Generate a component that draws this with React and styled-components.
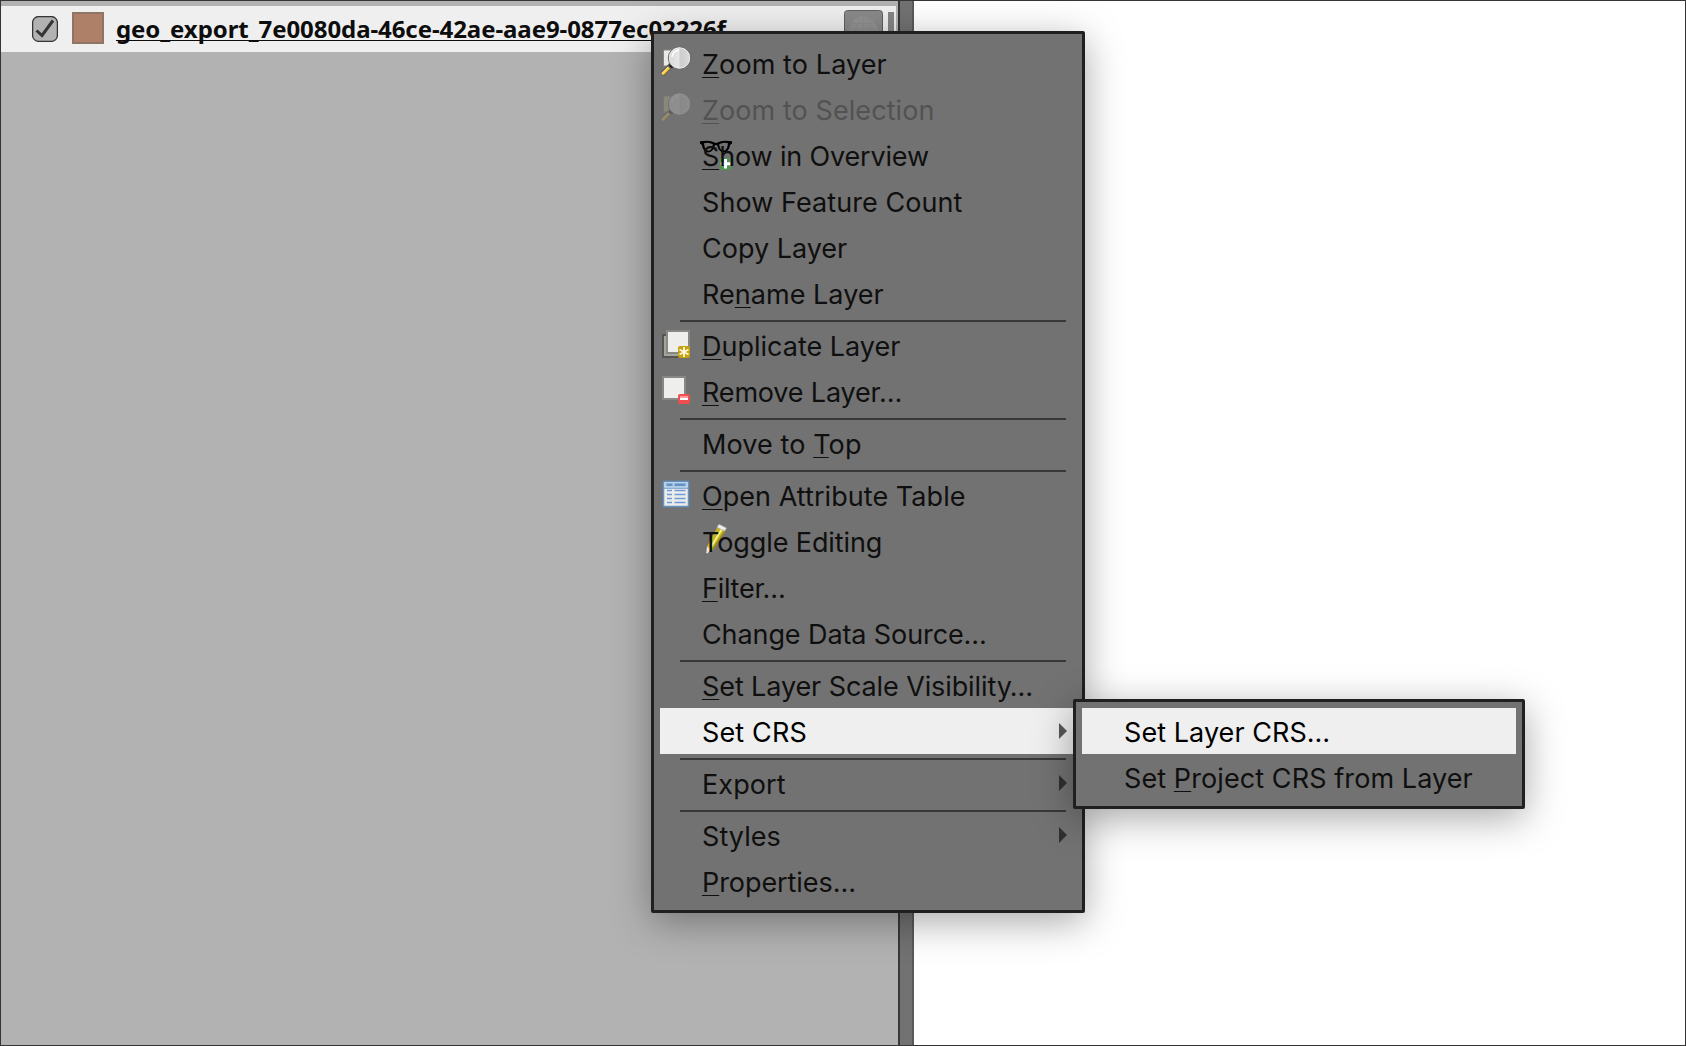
import React from "react";
import styled, { createGlobalStyle, css } from "styled-components";

const Global = createGlobalStyle`
  * { box-sizing: border-box; }
  body { margin: 0; overflow: hidden; background: #fff; }
`;

const Window = styled.div`
  position: relative;
  display: flex;
  width: 1686px;
  height: 1046px;
  overflow: hidden;
  border: 1px solid #353535;
  background: #fff;
  font-family: Inter, "Liberation Sans", sans-serif;
`;

const LayerPanel = styled.div`
  width: 897px;
  padding-top: 5px;
  background: #b2b2b2;
`;

const Splitter = styled.div`
  width: 16px;
  border-left: 2px solid #383838;
  border-right: 2px solid #5a5a5a;
  background: #727272;
`;

const LayerRow = styled.div`
  display: flex;
  align-items: flex-start;
  width: 895px;
  height: 46px;
  padding: 6px 2px 0 31px;
  background: #efefef;
`;

const CheckIcon = styled.svg`
  flex: none;
  width: 26px;
  height: 26px;
  margin-top: 4px;
`;

const Swatch = styled.div`
  flex: none;
  width: 32px;
  height: 32px;
  margin-left: 14px;
  border: 2px solid #8f7464;
  background: #ae8067;
`;

const LayerName = styled.span`
  margin-left: 12px;
  height: 34px;
  font: 700 24px/34px "Noto Sans", "Open Sans", sans-serif;
  letter-spacing: -0.07px;
  white-space: nowrap;
  color: #0d0d0d;
  text-decoration: underline 1px;
  text-decoration-skip-ink: none;
  text-underline-offset: 2px;
`;

const IndicatorIcon = styled.svg`
  flex: none;
  width: 39px;
  height: 36px;
  margin: -2px 5px 0 auto;
`;

const ScrollHandle = styled.div`
  flex: none;
  width: 6px;
  height: 30px;
  background: #858585;
`;

const Menu = styled.div`
  position: absolute;
  left: ${(p) => p.$x}px;
  top: ${(p) => p.$y}px;
  width: ${(p) => p.$width}px;
  padding: 6px;
  border: 3px solid #202020;
  border-radius: 2px;
  background: #727272;
  box-shadow: 0 9px 38px rgba(0, 0, 0, 0.34);
`;

const Item = styled.div`
  position: relative;
  display: flex;
  align-items: center;
  height: 46px;
  padding-left: 42px;
  font-size: 27px;
  line-height: 46px;
  white-space: nowrap;
  color: #0f0f0f;
  ${(p) => p.$active && css`background: #efefef; color: #000;`}
  ${(p) => p.$disabled && css`color: #525252;`}
`;

const Label = styled.span`
  position: relative;
  top: 2px;
  letter-spacing: ${(p) => p.$spacing}px;
`;

const Key = styled.u`
  text-decoration: underline 1px;
  text-decoration-skip-ink: none;
  text-underline-offset: 3px;
`;

const Separator = styled.div`
  height: 6px;
  margin: 0 10px 0 20px;
  border-bottom: 2px solid #383838;
`;

const ItemIcon = styled.svg`
  position: absolute;
  left: ${(p) => (p.$inset ? 40 : 0)}px;
  top: 4px;
  width: 32px;
  height: 32px;
  overflow: visible;
`;

const Arrow = styled.svg`
  position: absolute;
  right: 9px;
  top: 15px;
  width: 8px;
  height: 16px;
  fill: ${(p) => (p.$active ? "#585858" : "#303030")};
`;

function ZoomIcon({ faded }) {
  const id = faded ? "lensFaded" : "lens";
  return (
    <ItemIcon viewBox="0 0 32 32" opacity={faded ? 0.25 : 1}>
      <defs>
        <linearGradient id={id}>
          <stop offset="0" stopColor="#d8d8d8" />
          <stop offset="0.45" stopColor="#e6e6e6" />
          <stop offset="0.55" stopColor="#cecece" />
          <stop offset="1" stopColor="#dadada" />
        </linearGradient>
      </defs>
      <path d="M3.5 6h14v16h-14z" fill={faded ? "#d8c890" : "#e9e9e6"} stroke="#858580" />
      <path d="M11.5 20.5L2 30.5" stroke="#5b5b58" strokeWidth="5" />
      <path d="M9 23.5L2.3 30.3" stroke="#fcca3a" strokeWidth="3" />
      <path d="M8.2 23L2 29.5" stroke="#fff2b5" strokeWidth="0.8" />
      <path d="M13 20l-2.5 3" stroke="#111" strokeWidth="4" />
      <circle cx="19.5" cy="14" r="11.2" fill={`url(#${id})`} stroke="#626262" strokeWidth="1" />
      <circle cx="19.5" cy="14" r="10.2" fill="none" stroke="#ececec" strokeWidth="0.8" />
      <path d="M12 13a8 8 0 0 1 7-7" fill="none" stroke="#fff" strokeWidth="1.6" />
    </ItemIcon>
  );
}

function OverviewIcon() {
  return (
    <ItemIcon $inset viewBox="0 0 32 32">
      <path d="M0 5.2L7 4.8Q12 5 14.5 6.6Q16 7.2 17.5 6.6Q20 5 25 4.8L32 5.2V7.8L30.2 8.8Q29 16.4 23.5 16.4Q18.5 16 17.3 9.5Q16 8.6 14.7 9.5Q13.5 16 8.5 16.4Q3 16.4 1.8 8.8L0 7.8z" />
      <path d="M4 7.2Q9 5.8 12.8 8.2Q12.3 14.5 8.5 14.7Q4.8 14.7 4 7.2zM28 7.2Q23 5.8 19.2 8.2Q19.7 14.5 23.500 14.7Q27.2 14.7 28 7.2z" fill="#727272" />
      <rect x="19.5" y="22" width="12" height="12" rx="1.5" fill="#559055" />
      <path d="M25.5 23v9.5M20.8 27.8h9.5" stroke="#fff" strokeWidth="3" />
    </ItemIcon>
  );
}

function DuplicateIcon() {
  return (
    <ItemIcon viewBox="0 0 32 32">
      <path d="M3 9h22v22H3z" fill="#a5a59b" stroke="#555551" strokeWidth="2" />
      <path d="M7 5h22v22H7z" fill="#eeeeec" stroke="#888884" strokeWidth="2" />
      <rect x="18" y="20" width="12" height="12" rx="2" fill="#c5a10f" />
      <path d="M24 21v10M19.5 23.5l9 5M28.5 23.5l-9 5" stroke="#fff8dc" strokeWidth="1.8" />
    </ItemIcon>
  );
}

function RemoveIcon() {
  return (
    <ItemIcon viewBox="0 0 32 32">
      <path d="M3 5h22v22H3z" fill="#eeeeec" stroke="#888884" strokeWidth="2" />
      <rect x="18" y="22" width="12" height="10" rx="2" fill="#f04f4f" />
      <path d="M20 25h8" stroke="#fa9a9a" strokeWidth="2" />
      <path d="M20 27h8" stroke="#fff" strokeWidth="2" />
    </ItemIcon>
  );
}

function TableIcon() {
  return (
    <ItemIcon viewBox="0 0 32 32">
      <path d="M3.5 5.5h25v25h-25z" fill="#ececec" stroke="#6590c4" strokeWidth="1.5" />
      <path d="M4.3 6.3h23.4v5.2H4.3z" fill="#afd2ea" />
      <path d="M4 12.2h24" stroke="#6590c4" />
      <path d="M6.5 8.8h6M14.5 8.8h11" stroke="#6590c4" strokeWidth="2.6" />
      <path d="M7 14.5h5M7 18.5h5M7 22.5h5M7 26.5h5M14.5 14.5h11M14.5 18.5h11M14.5 22.5h11M14.5 26.5h11" stroke="#6b9dd4" strokeWidth="1.3" />
    </ItemIcon>
  );
}

function PencilIcon() {
  return (
    <ItemIcon $inset viewBox="0 0 32 32">
      <path d="M7 24.5L18 4l8 4-13 20-3 2z" fill="#c3b321" />
      <path d="M10 26.5L22 7" stroke="#f8f08a" strokeWidth="2" />
      <path d="M12.5 27.5L25 8.5" stroke="#8d7d0c" strokeWidth="1" />
      <path d="M19 2.3l7.5 3.8-2 3-7.5-3.9z" fill="#ececec" stroke="#aaa" strokeWidth=".6" />
      <path d="M7 24.5l4 3-5 5.5z" fill="#e8e8e8" />
      <path d="M5.7 31.500l2 0-2 2z" fill="#555" />
    </ItemIcon>
  );
}

const mainItems = [
  { label: "&Zoom to Layer", icon: <ZoomIcon />, spacing: 0.1 },
  { label: "&Zoom to Selection", icon: <ZoomIcon faded />, disabled: true, spacing: 0.07 },
  { label: "&Show in Overview", icon: <OverviewIcon />, spacing: -0.16 },
  { label: "Show Feature Count", spacing: 0.07 },
  { label: "Copy Layer" },
  { label: "Re&name Layer", spacing: 0.03 },
  null,
  { label: "&Duplicate Layer", icon: <DuplicateIcon /> },
  { label: "&Remove Layer…", icon: <RemoveIcon />, spacing: -0.17 },
  null,
  { label: "Move to &Top", spacing: 0.1 },
  null,
  { label: "&Open Attribute Table", icon: <TableIcon />, spacing: 0.05 },
  { label: "Toggle Editing", icon: <PencilIcon />, spacing: -0.1 },
  { label: "&Filter…", spacing: -0.27 },
  { label: "Change Data Source…", spacing: -0.1 },
  null,
  { label: "&Set Layer Scale Visibility…", spacing: -0.1 },
  { label: "Set CRS", active: true, arrow: true, spacing: 0.15 },
  null,
  { label: "Export", arrow: true, spacing: 0.1 },
  null,
  { label: "Styles", arrow: true, spacing: 0.07 },
  { label: "&Properties…", spacing: -0.07 },
];

const crsItems = [
  { label: "Set Layer CRS…", active: true, spacing: 0.06 },
  { label: "Set &Project CRS from Layer", spacing: 0.09 },
];

function Mnemonic({ text }) {
  const at = text.indexOf("&");
  if (at < 0) return text;
  return (
    <>
      {text.slice(0, at)}
      <Key>{text[at + 1]}</Key>
      {text.slice(at + 2)}
    </>
  );
}

function MenuItems({ items }) {
  return items.map((item, i) =>
    item ? (
      <Item key={i} $active={item.active} $disabled={item.disabled}>
        {item.icon}
        <Label $spacing={item.spacing ?? 0}>
          <Mnemonic text={item.label} />
        </Label>
        {item.arrow && (
          <Arrow viewBox="0 0 8 16" $active={item.active}>
            <path d="M0 0l8 8-8 8z" />
          </Arrow>
        )}
      </Item>
    ) : (
      <Separator key={i} />
    )
  );
}

export default function App() {
  return (
    <Window>
      <Global />
      <LayerPanel>
        <LayerRow>
          <CheckIcon viewBox="0 0 26 26">
            <rect x="0.6" y="0.6" width="24.8" height="24.8" rx="6" fill="#b2b2b2" stroke="#353535" strokeWidth="1.3" />
            <path d="M4.5 14.5l5.5 5L21 4.5" fill="none" stroke="#353535" strokeWidth="3" />
          </CheckIcon>
          <Swatch />
          <LayerName>geo_export_7e0080da-46ce-42ae-aae9-0877ec02226f</LayerName>
          <IndicatorIcon viewBox="0 0 39 36">
            <rect x="0.5" y="0.5" width="38" height="40" rx="3" fill="#898989" stroke="#606060" />
            <path d="M3.5 22Q7 10 15 6.5h8Q31 10 35.5 22z" fill="#929292" />
            <path d="M8 13.5h23M5 18.5h29M15 7l-4 15M23 7l4 15M19 7v15" stroke="#8a8a8a" fill="none" strokeDasharray="4 1.5" />
          </IndicatorIcon>
          <ScrollHandle />
        </LayerRow>
      </LayerPanel>
      <Splitter />
      <Menu $x={650} $y={30} $width={434}>
        <MenuItems items={mainItems} />
      </Menu>
      <Menu $x={1072} $y={698} $width={452}>
        <MenuItems items={crsItems} />
      </Menu>
    </Window>
  );
}
